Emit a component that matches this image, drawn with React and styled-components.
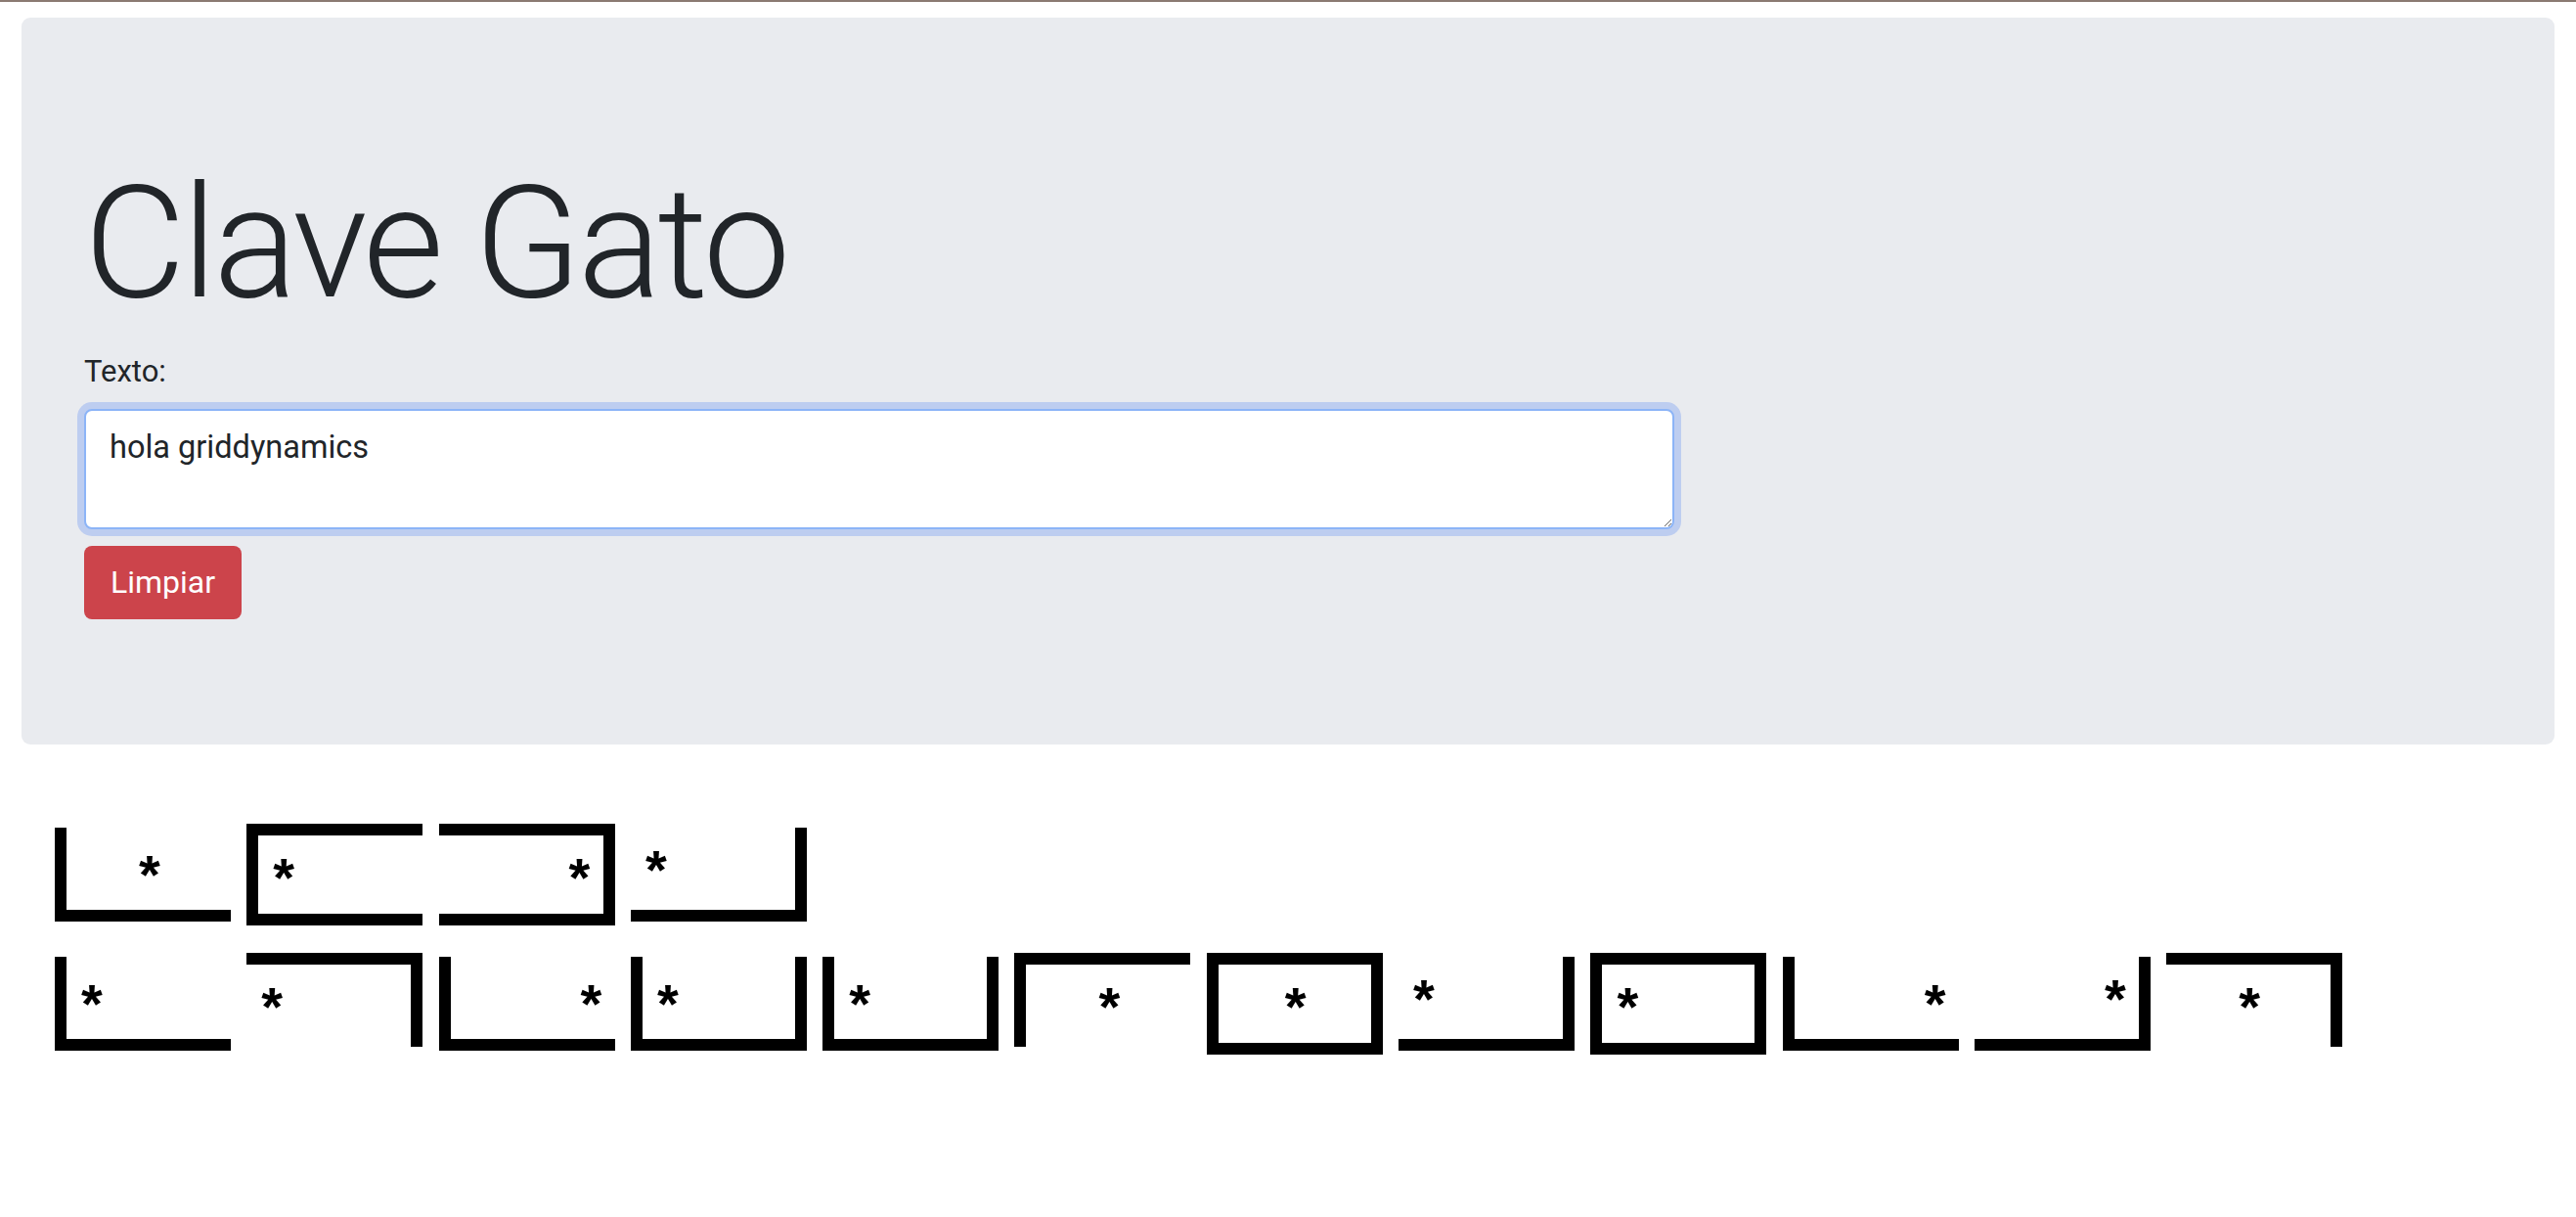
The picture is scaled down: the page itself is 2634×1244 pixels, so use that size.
import React from "react";
import styled, { createGlobalStyle } from "styled-components";

const GlobalStyle = createGlobalStyle`
  html, body {
    margin: 0;
    padding: 0;
    background: #fff;
  }
  body {
    font-family: Roboto, "Liberation Sans", sans-serif;
    color: #212529;
  }
`;

// clave gato: each cell of the grid holds three letters, the star says which one
const CELLS = [
  { letters: "abc", sides: "rb", starY: 30 },
  { letters: "def", sides: "lrb", starY: 35 },
  { letters: "ghi", sides: "lb", starY: 35 },
  { letters: "jkl", sides: "trb", starY: 42 },
  { letters: "mnñ", sides: "trbl", starY: 42 },
  { letters: "opq", sides: "tlb", starY: 42 },
  { letters: "rst", sides: "tr", starY: 42 },
  { letters: "uvw", sides: "tlr", starY: 42 },
  { letters: "xyz", sides: "tl", starY: 42 },
];

const POSITIONS = ["flex-start", "center", "flex-end"];

const encode = (ch) => {
  const cell = CELLS.find((c) => c.letters.includes(ch));
  if (!cell) return null;
  return { ...cell, pos: POSITIONS[cell.letters.indexOf(ch)] };
};

const TopRule = styled.div`
  height: 2px;
  background: #8b7a72;
`;

const Jumbotron = styled.section`
  margin: 16px 22px 0;
  padding: 135px 64px 128px;
  background: #e9ebef;
  border-radius: 9px;
`;

const Title = styled.h1`
  margin: 0 0 13px;
  font-family: Roboto, "Liberation Sans", sans-serif;
  font-weight: 300;
  font-size: 160px;
  line-height: 1.2;
  letter-spacing: -0.024em;
  color: #212529;
`;

const Label = styled.label`
  display: block;
  margin-bottom: 15px;
  font-size: 31px;
  line-height: 1.45;
`;

const TextArea = styled.textarea`
  display: block;
  box-sizing: border-box;
  width: 1626px;
  height: 123px;
  padding: 13px 24px;
  border: 2px solid #8cb4f7;
  border-radius: 8px;
  box-shadow: 0 0 0 7px #bdcdf0;
  outline: none;
  background: #fff;
  font-family: Roboto, "Liberation Sans", sans-serif;
  font-size: 32.5px;
  line-height: 1.5;
  color: #212529;
`;

const ClearButton = styled.button`
  display: flex;
  align-items: center;
  height: 75px;
  margin-top: 17px;
  padding: 0 27px;
  border: none;
  border-radius: 8px;
  background: #cc444b;
  color: #fff;
  font-family: Roboto, "Liberation Sans", sans-serif;
  font-size: 32px;
  line-height: 1.5;
  cursor: pointer;
`;

const Cipher = styled.div`
  display: flex;
  flex-direction: column;
  gap: 28px;
  margin-top: 81px;
  padding-left: 56px;
`;

const Row = styled.div`
  display: flex;
  align-items: flex-start;
  gap: 16.3px;
  height: 104px;
`;

const Glyph = styled.span`
  box-sizing: border-box;
  display: flex;
  align-items: flex-start;
  justify-content: ${(p) => p.$pos};
  width: 180px;
  height: ${(p) => (p.$t && p.$b ? 104 : 96)}px;
  margin-top: ${(p) => (p.$t ? 0 : 4)}px;
  padding: 0 15px;
  border: 0 solid #000;
  border-top-width: ${(p) => (p.$t ? 12 : 0)}px;
  border-right-width: ${(p) => (p.$r ? 12 : 0)}px;
  border-bottom-width: ${(p) => (p.$b ? 12 : 0)}px;
  border-left-width: ${(p) => (p.$l ? 12 : 0)}px;
`;

const Star = styled.span`
  display: block;
  width: 20px;
  height: 20px;
  margin-top: ${(p) => p.$offset}px;
  font-family: "Liberation Sans", Arial, sans-serif;
  font-weight: 700;
  font-size: 56px;
  line-height: 20px;
  text-align: center;
  color: #000;
`;

const CipherGlyph = ({ ch }) => {
  const g = encode(ch);
  if (!g) return null;
  const has = (s) => g.sides.includes(s);
  const top = has("t") ? 12 : 0;
  return (
    <Glyph $t={has("t")} $r={has("r")} $b={has("b")} $l={has("l")} $pos={g.pos}>
      <Star $offset={g.starY - top + 3}>*</Star>
    </Glyph>
  );
};

const App = () => {
  const text = "hola griddynamics";
  const words = text.split(" ");

  return (
    <>
      <GlobalStyle />
      <TopRule />
      <Jumbotron>
        <Title>Clave Gato</Title>
        <Label htmlFor="texto">Texto:</Label>
        <TextArea id="texto" defaultValue={text} spellCheck={false} />
        <ClearButton type="button">Limpiar</ClearButton>
      </Jumbotron>

      <Cipher>
        {words.map((w, i) => (
          <Row key={i}>
            {w.split("").map((ch, j) => (
              <CipherGlyph key={j} ch={ch} />
            ))}
          </Row>
        ))}
      </Cipher>
    </>
  );
};

export default App;
